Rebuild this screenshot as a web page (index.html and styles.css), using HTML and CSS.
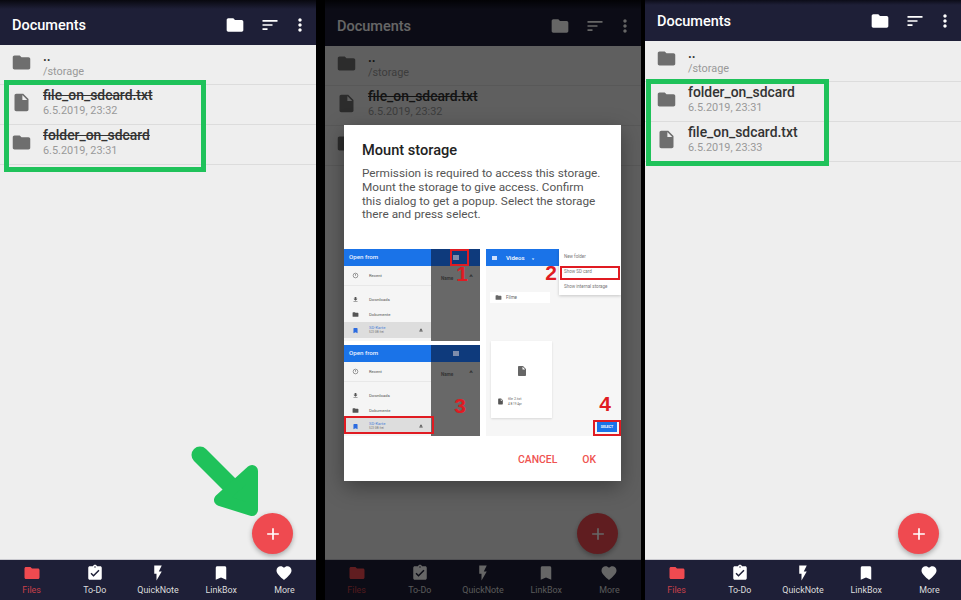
FILE: index.html
```html
<!DOCTYPE html>
<html lang="en">
<head>
    <meta charset="UTF-8">
    <meta name="viewport" content="width=device-width, initial-scale=1.0">
    <title>Documents</title>
    <link rel="stylesheet" href="styles.css">
</head>
<body>
    <svg class="defs" width="0" height="0">
        <symbol id="i-folder" viewBox="0 0 24 24"><path d="M10 4H4c-1.1 0-2 .9-2 2v12c0 1.1.9 2 2 2h16c1.1 0 2-.9 2-2V8c0-1.1-.9-2-2-2h-8l-2-2z"/></symbol>
        <symbol id="i-file" viewBox="0 0 24 24"><path d="M6 2c-1.1 0-1.99.9-1.99 2L4 20c0 1.1.89 2 1.99 2H18c1.1 0 2-.9 2-2V8l-6-6H6zm7 7V3.5L18.5 9H13z"/></symbol>
        <symbol id="i-sort" viewBox="0 0 24 24"><path d="M3 18h6v-2H3v2zM3 6v2h18V6H3zm0 7h12v-2H3v2z"/></symbol>
        <symbol id="i-more" viewBox="0 0 24 24"><path d="M12 8c1.1 0 2-.9 2-2s-.9-2-2-2-2 .9-2 2 .9 2 2 2zm0 2c-1.1 0-2 .9-2 2s.9 2 2 2 2-.9 2-2-.9-2-2-2zm0 6c-1.1 0-2 .9-2 2s.9 2 2 2 2-.9 2-2-.9-2-2-2z"/></symbol>
        <symbol id="i-plus" viewBox="0 0 24 24"><path d="M19 13h-6v6h-2v-6H5v-2h6V5h2v6h6v2z"/></symbol>
        <symbol id="i-todo" viewBox="0 0 24 24"><path d="M19 3h-4.18C14.4 1.84 13.3 1 12 1c-1.3 0-2.4.84-2.82 2H5c-1.1 0-2 .9-2 2v14c0 1.1.9 2 2 2h14c1.1 0 2-.9 2-2V5c0-1.1-.9-2-2-2zm-7 0c.55 0 1 .45 1 1s-.45 1-1 1-1-.45-1-1 .45-1 1-1zm-2 14l-4-4 1.41-1.41L10 14.17l6.59-6.59L18 9l-8 8z"/></symbol>
        <symbol id="i-flash" viewBox="0 0 24 24"><path d="M7 2v11h3v9l7-12h-4l4-8z"/></symbol>
        <symbol id="i-mark" viewBox="0 0 24 24"><path d="M17 3H7c-1.1 0-1.99.9-1.99 2L5 21l7-3 7 3V5c0-1.1-.9-2-2-2z"/></symbol>
        <symbol id="i-heart" viewBox="0 0 24 24"><path d="M12 21.35l-1.45-1.32C5.4 15.36 2 12.28 2 8.5 2 5.42 4.42 3 7.5 3c1.74 0 3.34.81 4.5 2.09C13.16 3.81 14.76 3 16.5 3 19.58 3 22 5.42 22 8.5c0 3.78-3.4 6.86-8.55 11.54L12 21.35z"/></symbol>
        <symbol id="i-recent" viewBox="0 0 24 24"><circle cx="12" cy="12" r="8" fill="none" stroke="#777" stroke-width="2.5"/><path d="M11 7h2v6h-2z"/></symbol>
        <symbol id="i-down" viewBox="0 0 24 24"><path d="M19 9h-4V3H9v6H5l7 7 7-7zM5 18v2h14v-2H5z"/></symbol>
        <symbol id="i-eject" viewBox="0 0 24 24"><path d="M5 17h14v2H5zm7-12L5.33 15h13.34z"/></symbol>
    </svg>

    <!-- before: names struck through -->
    <section class="phone">
        <header class="topbar">
            <span class="title">Documents</span>
            <svg class="top-icon top-folder"><use href="#i-folder"/></svg>
            <svg class="top-icon top-sort"><use href="#i-sort"/></svg>
            <svg class="top-icon"><use href="#i-more"/></svg>
        </header>
        <main class="list struck">
            <div class="row row-up">
                <svg class="row-icon"><use href="#i-folder"/></svg>
                <div class="row-text"><p class="name">..</p><p class="sub">/storage</p></div>
            </div>
            <div class="row">
                <svg class="row-icon"><use href="#i-file"/></svg>
                <div class="row-text"><p class="name">file_on_sdcard.txt</p><p class="sub">6.5.2019, 23:32</p></div>
            </div>
            <div class="row">
                <svg class="row-icon"><use href="#i-folder"/></svg>
                <div class="row-text"><p class="name">folder_on_sdcard</p><p class="sub">6.5.2019, 23:31</p></div>
            </div>
        </main>
        <nav class="tabs">
            <div class="tab tab-on"><svg><use href="#i-folder"/></svg><span>Files</span></div>
            <div class="tab"><svg><use href="#i-todo"/></svg><span>To-Do</span></div>
            <div class="tab"><svg><use href="#i-flash"/></svg><span>QuickNote</span></div>
            <div class="tab"><svg><use href="#i-mark"/></svg><span>LinkBox</span></div>
            <div class="tab"><svg><use href="#i-heart"/></svg><span>More</span></div>
        </nav>
        <div class="fab"><svg><use href="#i-plus"/></svg></div>
        <div class="mark mark-left"></div>
        <svg class="arrow" viewBox="0 0 70 70"><path d="M6 5 L42 41" class="arrow-tail"/><polygon points="58,21 58,60 26,50" class="arrow-head"/></svg>
    </section>

    <!-- dialog -->
    <section class="phone phone-mid">
        <header class="topbar">
            <span class="title">Documents</span>
            <svg class="top-icon top-folder"><use href="#i-folder"/></svg>
            <svg class="top-icon top-sort"><use href="#i-sort"/></svg>
            <svg class="top-icon"><use href="#i-more"/></svg>
        </header>
        <main class="list struck">
            <div class="row row-up">
                <svg class="row-icon"><use href="#i-folder"/></svg>
                <div class="row-text"><p class="name">..</p><p class="sub">/storage</p></div>
            </div>
            <div class="row">
                <svg class="row-icon"><use href="#i-file"/></svg>
                <div class="row-text"><p class="name">file_on_sdcard.txt</p><p class="sub">6.5.2019, 23:32</p></div>
            </div>
            <div class="row">
                <svg class="row-icon"><use href="#i-folder"/></svg>
            </div>
        </main>
        <nav class="tabs">
            <div class="tab tab-on"><svg><use href="#i-folder"/></svg><span>Files</span></div>
            <div class="tab"><svg><use href="#i-todo"/></svg><span>To-Do</span></div>
            <div class="tab"><svg><use href="#i-flash"/></svg><span>QuickNote</span></div>
            <div class="tab"><svg><use href="#i-mark"/></svg><span>LinkBox</span></div>
            <div class="tab"><svg><use href="#i-heart"/></svg><span>More</span></div>
        </nav>
        <div class="fab"><svg><use href="#i-plus"/></svg></div>
        <div class="scrim"></div>
        <div class="dialog">
            <h2 class="dialog-title">Mount storage</h2>
            <p class="dialog-text">Permission is required to access this storage. Mount the storage to give access. Confirm this dialog to get a popup. Select the storage there and press select.</p>
            <div class="shots">
                <div class="picker">
                    <div class="picker-main">
                        <div class="picker-bar">Open from</div>
                        <div class="pick pick-recent"><svg><use href="#i-recent"/></svg>Recent</div>
                        <div class="pick"><svg><use href="#i-down"/></svg>Downloads</div>
                        <div class="pick"><svg><use href="#i-folder"/></svg>Dokumente</div>
                        <div class="pick pick-sd"><svg class="sd-icon"><use href="#i-mark"/></svg><span>SD-Karte<br><small>523 GB frei</small></span><svg class="eject"><use href="#i-eject"/></svg></div>
                    </div>
                    <div class="picker-side">
                        <div class="side-bar"><i></i></div>
                        <div class="side-sort">Name<b>^</b></div>
                    </div>
                </div>
                <div class="browser">
                    <div class="browser-bar">
                        <div class="browser-title"><i></i>Videos <small>v</small></div>
                        <div class="menu">
                            <span>New folder</span>
                            <span>Show SD card</span>
                            <span>Show internal storage</span>
                        </div>
                    </div>
                    <div class="chip"><svg><use href="#i-folder"/></svg>Filme</div>
                    <div class="card">
                        <svg class="card-doc"><use href="#i-file"/></svg>
                        <div class="card-foot"><svg><use href="#i-file"/></svg><span>file 2.txt<br><small>4 B 19 Apr</small></span></div>
                    </div>
                    <div class="select-btn">SELECT</div>
                </div>
                <div class="picker picker-low">
                    <div class="picker-main">
                        <div class="picker-bar">Open from</div>
                        <div class="pick pick-recent"><svg><use href="#i-recent"/></svg>Recent</div>
                        <div class="pick"><svg><use href="#i-down"/></svg>Downloads</div>
                        <div class="pick"><svg><use href="#i-folder"/></svg>Dokumente</div>
                        <div class="pick pick-sd"><svg class="sd-icon"><use href="#i-mark"/></svg><span>SD-Karte<br><small>523 GB frei</small></span><svg class="eject"><use href="#i-eject"/></svg></div>
                    </div>
                    <div class="picker-side">
                        <div class="side-bar"><i></i></div>
                        <div class="side-sort">Name<b>^</b></div>
                    </div>
                </div>
                <div class="hint hint-1"></div>
                <div class="hint hint-2"></div>
                <div class="hint hint-3"></div>
                <div class="hint hint-4"></div>
                <span class="num num-1">1</span>
                <span class="num num-2">2</span>
                <span class="num num-3">3</span>
                <span class="num num-4">4</span>
            </div>
            <div class="dialog-btns"><span>CANCEL</span><span>OK</span></div>
        </div>
    </section>

    <!-- after -->
    <section class="phone phone-last">
        <header class="topbar">
            <span class="title">Documents</span>
            <svg class="top-icon top-folder"><use href="#i-folder"/></svg>
            <svg class="top-icon top-sort"><use href="#i-sort"/></svg>
            <svg class="top-icon"><use href="#i-more"/></svg>
        </header>
        <main class="list">
            <div class="row row-up">
                <svg class="row-icon"><use href="#i-folder"/></svg>
                <div class="row-text"><p class="name">..</p><p class="sub">/storage</p></div>
            </div>
            <div class="row">
                <svg class="row-icon"><use href="#i-folder"/></svg>
                <div class="row-text"><p class="name">folder_on_sdcard</p><p class="sub">6.5.2019, 23:31</p></div>
            </div>
            <div class="row">
                <svg class="row-icon"><use href="#i-file"/></svg>
                <div class="row-text"><p class="name">file_on_sdcard.txt</p><p class="sub">6.5.2019, 23:33</p></div>
            </div>
        </main>
        <nav class="tabs">
            <div class="tab tab-on"><svg><use href="#i-folder"/></svg><span>Files</span></div>
            <div class="tab"><svg><use href="#i-todo"/></svg><span>To-Do</span></div>
            <div class="tab"><svg><use href="#i-flash"/></svg><span>QuickNote</span></div>
            <div class="tab"><svg><use href="#i-mark"/></svg><span>LinkBox</span></div>
            <div class="tab"><svg><use href="#i-heart"/></svg><span>More</span></div>
        </nav>
        <div class="fab"><svg><use href="#i-plus"/></svg></div>
        <div class="mark mark-right"></div>
    </section>
</body>
</html>
```

FILE: styles.css
```css
* {box-sizing: border-box;}
html, body {margin: 0; height: 100%;}
body {display: flex; width: 961px; height: 600px; overflow: hidden; background: #000; font-family: Roboto, "Liberation Sans", sans-serif;}
p, h2 {margin: 0;}
.defs {position: absolute;}

.phone {position: relative; display: flex; flex-direction: column; flex: none; width: 316px; height: 600px; background: #eee; overflow: hidden;}
.phone-mid {margin-left: 9px;}
.phone-last {margin-left: 4px;}

/* top bar */
.topbar {display: flex; align-items: center; flex: none; height: 45px; padding: 5px 6px 0 12px; background: linear-gradient(#08080f 0, #1e1f37 9px); color: #fff;}
.phone-mid .topbar {height: 46px; padding-top: 6px;}
.phone-last .topbar {height: 41px; padding-top: 1px; background: linear-gradient(#0c0c18 0, #1e1f37 5px);}
.title {flex: 1; font-size: 14.5px; font-weight: 500;}
.top-icon {width: 20px; height: 20px; fill: #fff;}
.top-folder {margin-right: 15px;}
.top-sort {margin-right: 10px;}

/* file list */
.list {flex: 1;}
.row {display: flex; align-items: center; height: 40px; padding: 0 0 4px 11px; border-bottom: 1px solid #dcdcdc;}
.row-up {padding-bottom: 5px;}
.row-up .row-text {padding-top: 2px;}
.phone-last .row-up {height: 41px;}
.phone-last .row-up .row-text {padding-top: 4px;}
.row-icon {width: 21px; height: 21px; margin-right: 11px; fill: #6e6e6e; flex: none;}
.name {font-size: 13.9px; font-weight: 500; line-height: 17px; color: #333;}
.sub {font-size: 10.9px; line-height: 14px; color: #999;}
.struck .name {text-decoration: line-through;}
.struck .row-up .name {text-decoration: none;}

/* bottom tabs */
.tabs {display: flex; flex: none; height: 40px; background: #1e1f37; box-shadow: 0 -1px 0 #c9c9cf;}
.tab {display: flex; flex-direction: column; align-items: center; flex: 1; padding-top: 4px; color: #ddd; font-size: 8.9px; line-height: 12px;}
.tab svg {width: 18px; height: 18px; fill: #fff; margin-bottom: 2px;}
.tab-on {color: #c9404a;}
.tab-on svg {fill: #ef4a50;}

.fab {position: absolute; right: 23px; bottom: 46px; display: flex; align-items: center; justify-content: center; width: 41px; height: 41px; border-radius: 50%; background: #ef4a50; box-shadow: 0 2px 5px rgba(0,0,0,.3);}
.phone-last .fab {right: 22px;}
.fab svg {width: 20px; height: 20px; fill: #fff;}

/* green annotations */
.mark {position: absolute; border: 5px solid #1fc25a;}
.mark-left {left: 4px; top: 80px; width: 202px; height: 92px;}
.mark-right {left: 1px; top: 79px; width: 183px; height: 87px;}
.arrow {position: absolute; left: 194px; top: 450px; width: 70px; height: 70px; overflow: visible;}
.arrow-tail {fill: none; stroke: #1fc25a; stroke-width: 17; stroke-linecap: round;}
.arrow-head {fill: #1fc25a; stroke: #1fc25a; stroke-width: 12; stroke-linejoin: round;}

/* dialog */
.scrim {position: absolute; inset: 0; background: rgba(0,0,0,.6);}
.dialog {position: absolute; left: 19px; top: 125px; width: 277px; height: 356px; background: #fff; box-shadow: 0 6px 20px rgba(0,0,0,.35);}
.dialog-title {padding: 16px 18px 0; font-size: 14.6px; font-weight: 500; line-height: 18px; color: #222;}
.dialog-text {height: 90px; padding: 8px 18px 0; font-size: 11.8px; line-height: 13.8px; color: #555;}
.dialog-btns {display: flex; justify-content: flex-end; gap: 25px; padding: 17px 25px 0 0; font-size: 10.4px; font-weight: 500; color: #ef5350;}

/* screenshots inside dialog */
.shots {position: relative; display: grid; grid-template-columns: 136px 135px; grid-template-rows: 92px 91px; column-gap: 6px; row-gap: 4px; height: 187px;}
.picker {display: flex; overflow: hidden;}
.picker-low {grid-row: 2; grid-column: 1;}
.picker-main {width: 87px; background: #f5f5f5; font-size: 4.2px; color: #555;}
.picker-bar {height: 17px; padding: 0 5px; background: #1a73e8; color: #e8f0ff; font-size: 6.2px; font-weight: 500; line-height: 17px;}
.pick {display: flex; align-items: center; height: 15px; padding-left: 8px;}
.pick svg {width: 7px; height: 7px; margin-right: 10px; fill: #555; flex: none;}
.pick-recent {height: 20px; margin-bottom: 6px; border-bottom: 1px solid #e8e8e8;}
.pick-sd {height: 16px; background: #ddd; color: #4a7fd8; line-height: 4.5px;}
.pick-sd small {font-size: 3px; color: #777;}
.pick svg.sd-icon {fill: #2b6be0;}
.pick svg.eject {width: 6px; height: 6px; margin: 0 7px 0 auto;}
.picker-side {flex: 1; background: #686868; font-size: 4.6px; color: #333; font-weight: 700;}
.side-bar {display: flex; justify-content: center; height: 17px; padding-top: 6px; background: #0e3a7c;}
.side-bar i {width: 6px; height: 5px; background: #7d8cab;}
.side-sort {padding: 7px 0 0 10px;}
.side-sort b {margin-left: 16px; font-size: 8px;}

.browser {position: relative; grid-row: 1 / 3; grid-column: 2; background: #f6f6f6; font-size: 4.5px; color: #666; overflow: hidden;}
.browser-bar {display: flex; height: 17px; background: #1a73e8;}
.browser-title {flex: 1; padding-left: 6px; color: #fff; font-size: 6px; font-weight: 500; line-height: 17px;}
.browser-title i {display: inline-block; width: 5px; height: 4px; margin-right: 9px; background: #cfe0fb;}
.browser-title small {margin-left: 6px; font-size: 4px;}
.menu {display: flex; flex-direction: column; flex: none; width: 62px; height: 46px; padding-left: 5px; background: #fff; box-shadow: 0 1px 3px rgba(0,0,0,.2); line-height: 15px; color: #777;}
.menu span {height: 15px; white-space: nowrap;}
.chip {position: absolute; left: 4px; top: 43px; display: flex; align-items: center; gap: 4px; width: 60px; height: 11px; padding-left: 5px; background: #fff;}
.chip svg {width: 7px; height: 7px; fill: #666;}
.card {position: absolute; left: 5px; top: 92px; display: flex; flex-direction: column; align-items: center; width: 61px; height: 77px; padding-top: 24px; background: #fff; box-shadow: 0 1px 2px rgba(0,0,0,.12);}
.card-doc {width: 12px; height: 12px; fill: #666; flex: none;}
.card-foot {display: flex; align-items: center; gap: 4px; align-self: flex-start; margin-top: 20px; padding-left: 6px; font-size: 3.8px; line-height: 4.5px;}
.card-foot svg {width: 7px; height: 7px; fill: #555;}
.card-foot small {font-size: 3px;}
.select-btn {position: absolute; left: 111px; top: 173px; width: 20px; height: 10px; background: #1a73e8; color: #fff; font-size: 3.5px; font-weight: 700; line-height: 10px; text-align: center;}

.hint {position: absolute; border: 2px solid #e01b22;}
.hint-1 {left: 106px; top: 0; width: 19px; height: 17px;}
.hint-2 {left: 216px; top: 17px; width: 60px; height: 14px;}
.hint-3 {left: 0; top: 167px; width: 90px; height: 18px;}
.hint-4 {left: 249px; top: 171px; width: 28px; height: 16px;}
.num {position: absolute; width: 16px; color: #e01b22; font-family: "Liberation Sans", sans-serif; font-size: 21px; font-weight: 700; line-height: 20px; text-align: center;}
.num-1 {left: 110px; top: 15px;}
.num-2 {left: 199px; top: 14px;}
.num-3 {left: 108px; top: 147px;}
.num-4 {left: 253px; top: 145px;}
```
